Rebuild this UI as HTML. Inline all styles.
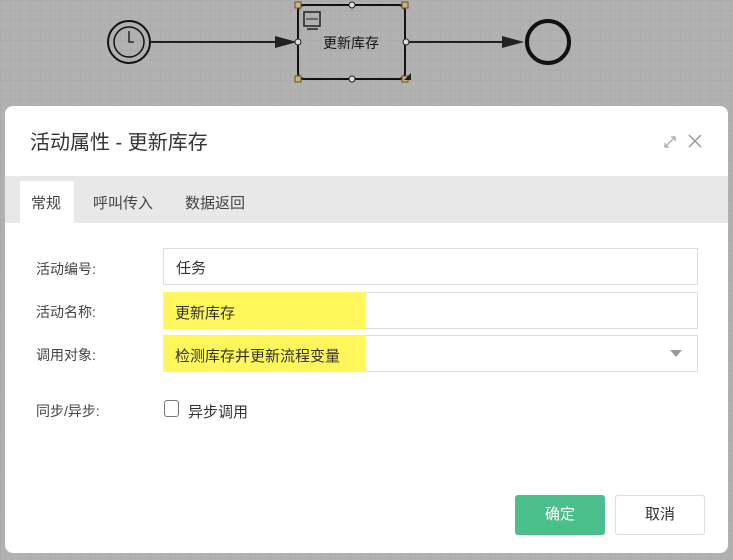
<!DOCTYPE html>
<html><head><meta charset="utf-8"><style>
*{margin:0;padding:0;box-sizing:border-box}
body{width:733px;height:560px;overflow:hidden;background:#b1b1b1;font-family:"Liberation Sans","Noto Sans CJK SC",sans-serif;position:relative;
background-image:linear-gradient(rgba(150,150,150,.2) 1px,transparent 1px),linear-gradient(90deg,rgba(150,150,150,.2) 1px,transparent 1px);background-size:10px 10px}
.dlg{position:absolute;left:5px;top:106px;width:723px;height:447px;background:#fff;border-radius:8px}
.title{position:absolute;left:25px;top:20px;font-size:20px;color:#333}
.tabs{position:absolute;left:0;top:70px;width:723px;height:47px;background:#e8e8e8}
.tab{position:absolute;top:16px;font-size:15px;color:#444}
.act{position:absolute;left:15px;top:5px;width:54px;height:42px;background:#fff}
.lbl{position:absolute;left:31px;font-size:14px;color:#444}
.inp{position:absolute;left:158px;width:535px;height:37px;border:1px solid #ddd;font-size:15px;color:#333;padding:8px 12px}
.hl{position:absolute;left:158px;width:203px;height:37px;background:#fef65a}
.btn{position:absolute;top:389px;width:90px;height:40px;border-radius:3px;font-size:15px;text-align:center;line-height:40px}
</style></head><body>
<svg width="733" height="100" style="position:absolute;left:0;top:0">
<circle cx="129" cy="42" r="21" fill="none" stroke="#111" stroke-width="2"/>
<circle cx="129" cy="42" r="15" fill="none" stroke="#111" stroke-width="1.5"/>
<path d="M129 31v11h5" fill="none" stroke="#111" stroke-width="1.3"/>
<line x1="150" y1="42" x2="285" y2="42" stroke="#222" stroke-width="2"/>
<path d="M275 36L297 42L275 48Z" fill="#222"/>
<rect x="298" y="5" width="107" height="74" rx="6" fill="none" stroke="#111" stroke-width="2"/>
<rect x="304" y="12" width="16" height="14" fill="none" stroke="#222" stroke-width="1.5"/>
<line x1="306" y1="19" x2="318" y2="19" stroke="#222"/><line x1="307" y1="29" x2="318" y2="29" stroke="#222" stroke-width="1.5"/>
<text x="351" y="48" text-anchor="middle" font-size="14" fill="#111" font-family="Liberation Sans,Noto Sans CJK SC,sans-serif">更新库存</text>
<line x1="406" y1="42" x2="510" y2="42" stroke="#222" stroke-width="2"/>
<path d="M502 36L524 42L502 48Z" fill="#222"/>
<circle cx="548" cy="42" r="21" fill="none" stroke="#111" stroke-width="4"/>
<g fill="#c8b48a" stroke="#6b4f12"><rect x="295" y="2" width="6" height="6"/><rect x="402" y="2" width="6" height="6"/><rect x="295" y="76" width="6" height="6"/><rect x="402" y="76" width="6" height="6"/></g>
<g fill="#ddd" stroke="#222"><circle cx="352" cy="5" r="3"/><circle cx="352" cy="79" r="3"/><circle cx="298" cy="42" r="3"/><circle cx="406" cy="42" r="3"/></g>
<path d="M411 73v7h-7z" fill="#222"/>
</svg>
<div class="dlg">
<div class="title">活动属性 - 更新库存</div>
<svg width="16" height="16" style="position:absolute;left:657px;top:28px"><path d="M3 13L13 3M9 3h4v4M3 9v4h4" fill="none" stroke="#aaa" stroke-width="1.3"/></svg>
<svg width="16" height="16" style="position:absolute;left:682px;top:27px"><path d="M2 2L14 14M14 2L2 14" stroke="#999" stroke-width="1.5"/></svg>
<div class="tabs"><div class="act"></div>
<div class="tab" style="left:26px">常规</div><div class="tab" style="left:88px">呼叫传入</div><div class="tab" style="left:180px">数据返回</div></div>
<div class="lbl" style="top:153px">活动编号:</div>
<div class="lbl" style="top:196px">活动名称:</div>
<div class="lbl" style="top:239px">调用对象:</div>
<div class="lbl" style="top:295px">同步/异步:</div>
<div class="inp" style="top:142px">任务</div>
<div class="inp" style="top:186px"></div><div class="hl" style="top:186px"></div>
<div class="inp" style="top:229px;border:1px solid #ddd"></div><div class="hl" style="top:229px"></div>
<div style="position:absolute;left:170px;top:196px;font-size:15px;color:#333">更新库存</div>
<div style="position:absolute;left:170px;top:239px;font-size:15px;color:#333">检测库存并更新流程变量</div>
<div style="position:absolute;left:665px;top:244px;width:0;height:0;border-left:6px solid transparent;border-right:6px solid transparent;border-top:7px solid #999"></div>
<div style="position:absolute;left:159px;top:294px;width:15px;height:17px;border:1.5px solid #777;border-radius:3px"></div>
<div style="position:absolute;left:183px;top:295px;font-size:15px;color:#333">异步调用</div>
<div class="btn" style="left:510px;background:#4abf8b;color:#fff">确定</div>
<div class="btn" style="left:610px;border:1px solid #ddd;color:#333;line-height:38px">取消</div>
</div>
</body></html>
